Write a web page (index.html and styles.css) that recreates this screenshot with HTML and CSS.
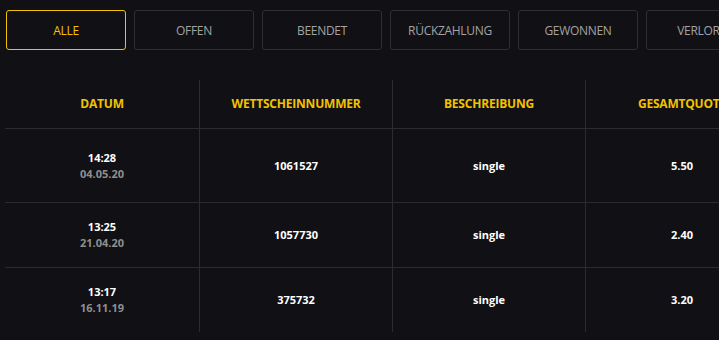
FILE: index.html
```html
<!DOCTYPE html>
<html lang="de">
<head>
  <meta charset="utf-8">
  <title>Wettverlauf</title>
  <link rel="stylesheet" href="styles.css">
</head>
<body>

  <div class="page">
    <div class="filters">
      <button class="filter active">Alle</button>
      <button class="filter">Offen</button>
      <button class="filter">Beendet</button>
      <button class="filter">Rückzahlung</button>
      <button class="filter">Gewonnen</button>
      <button class="filter">Verloren</button>
    </div>

    <div class="bets">
      <div class="row head">
        <div class="cell">Datum</div>
        <div class="cell">Wettscheinnummer</div>
        <div class="cell">Beschreibung</div>
        <div class="cell">Gesamtquote</div>
      </div>
      <div class="row first">
        <div class="cell"><span class="time">14:28</span><span class="date">04.05.20</span></div>
        <div class="cell">1061527</div>
        <div class="cell">single</div>
        <div class="cell">5.50</div>
      </div>
      <div class="row">
        <div class="cell"><span class="time">13:25</span><span class="date">21.04.20</span></div>
        <div class="cell">1057730</div>
        <div class="cell">single</div>
        <div class="cell">2.40</div>
      </div>
      <div class="row">
        <div class="cell"><span class="time">13:17</span><span class="date">16.11.19</span></div>
        <div class="cell">375732</div>
        <div class="cell">single</div>
        <div class="cell">3.20</div>
      </div>
    </div>
  </div>

</body>
</html>
```

FILE: styles.css
```css
body {
  margin: 0;
  background-color: #111014;
  font-family: 'Open Sans', 'DejaVu Sans', sans-serif;
  overflow: hidden;
}
.page {
  padding: 10px 0 0 6px;
}
.filters {
  display: flex;
  gap: 8px;
}
.filter {
  flex: 0 0 120px;
  height: 40px;
  background-color: #111014;
  border: 1px solid #2f2e32;
  border-radius: 3px;
  color: #a3a3a3;
  font-family: inherit;
  font-size: 12px;
  text-transform: uppercase;
  letter-spacing: -0.3px;
  padding: 0;
}
.filter.active {
  border-color: #f2c200;
  color: #f2c200;
}
.bets {
  margin-top: 30px;
  margin-left: -1px;
}
.row {
  display: grid;
  grid-template-columns: 194px repeat(3, 193px);
  box-sizing: border-box;
  height: 65px;
  border-top: 1px solid #2c2b2f;
}
.row.head {
  height: 48px;
  border-top: none;
}
.row.first {
  height: 74px;
}
.cell {
  display: flex;
  flex-direction: column;
  align-items: center;
  justify-content: center;
  color: #fff;
  font-size: 11px;
  font-weight: 700;
  line-height: 16px;
}
.cell + .cell {
  border-left: 1px solid #2c2b2f;
}
.head .cell {
  color: #f2c200;
  font-size: 12px;
  text-transform: uppercase;
  letter-spacing: -0.2px;
}
.date {
  color: #8f8f8f;
}
```
